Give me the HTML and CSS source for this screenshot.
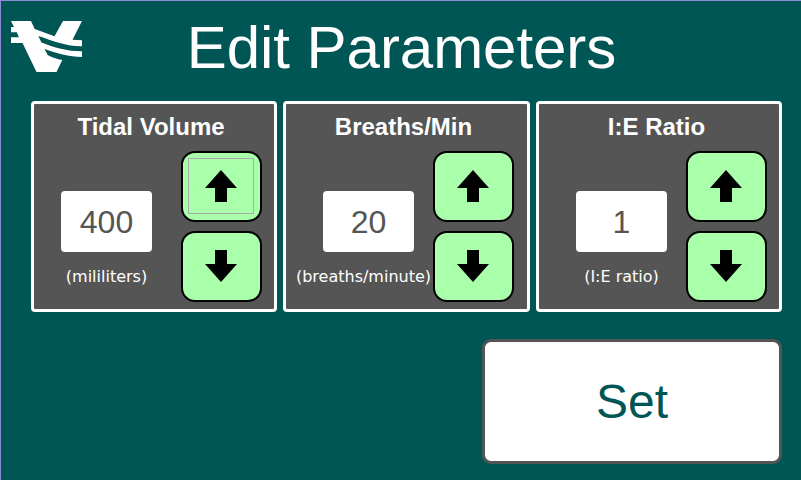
FILE: index.html
```html
<!DOCTYPE html>
<html lang="en">
<head>
<meta charset="utf-8">
<title>Edit Parameters</title>
<link rel="stylesheet" href="styles.css">
</head>
<body>
<main class="screen">
  <header class="header">
    <svg class="logo" width="72" height="52" viewBox="0 0 72 52" fill="#fff" aria-hidden="true">
      <path d="M0 0H20L23.700 8L43.500 15.300L52 0H71L61.500 18.700L71 19.300V25.300C56 25.500 42 20 27.300 15L30.500 21.500C43 26.500 56 30.300 71 30.300V36C58 36 45 32 33.500 28L36.700 34C41 36.500 46 38 51.300 39L45.500 51H25.500L11.500 22H0V16.300H8L5.700 11.300H0V6H3Z"/>
    </svg>
    <h1 class="title">Edit Parameters</h1>
  </header>
  <section class="panels">
    <article class="panel panel-tidal">
      <h2 class="panel-title">Tidal Volume</h2>
      <div class="panel-body">
        <div class="reading"><output class="value">400</output><span class="unit">(mililiters)</span></div>
        <div class="steppers">
          <button class="step step-focus" aria-label="Increase"><svg width="32" height="33" viewBox="0 0 32 33"><path d="M16 0L32 18H22V32H10V18H0Z"/></svg></button>
          <button class="step" aria-label="Decrease"><svg width="32" height="33" viewBox="0 0 32 33"><path d="M10 0H22V14H32L16 32L0 14H10Z"/></svg></button>
        </div>
      </div>
    </article>
    <article class="panel panel-breaths">
      <h2 class="panel-title">Breaths/Min</h2>
      <div class="panel-body">
        <div class="reading"><output class="value">20</output><span class="unit">(breaths/minute)</span></div>
        <div class="steppers">
          <button class="step" aria-label="Increase"><svg width="32" height="33" viewBox="0 0 32 33"><path d="M16 0L32 18H22V32H10V18H0Z"/></svg></button>
          <button class="step" aria-label="Decrease"><svg width="32" height="33" viewBox="0 0 32 33"><path d="M10 0H22V14H32L16 32L0 14H10Z"/></svg></button>
        </div>
      </div>
    </article>
    <article class="panel panel-ratio">
      <h2 class="panel-title">I:E Ratio</h2>
      <div class="panel-body">
        <div class="reading"><output class="value">1</output><span class="unit">(I:E ratio)</span></div>
        <div class="steppers">
          <button class="step" aria-label="Increase"><svg width="32" height="33" viewBox="0 0 32 33"><path d="M16 0L32 18H22V32H10V18H0Z"/></svg></button>
          <button class="step" aria-label="Decrease"><svg width="32" height="33" viewBox="0 0 32 33"><path d="M10 0H22V14H32L16 32L0 14H10Z"/></svg></button>
        </div>
      </div>
    </article>
  </section>
  <footer class="footer"><button class="set">Set</button></footer>
</main>
</body>
</html>
```
FILE: styles.css
```css
*, *::after { box-sizing: border-box; }
body { margin: 0; }
button { padding: 0; font: inherit; }
.screen {
  width: 801px;
  height: 480px;
  overflow: hidden;
  background: #005555;
  border-top: 1px solid #8c8cd8;
  border-left: 1px solid #8c8cd8;
  font-family: "Liberation Sans", Arial, sans-serif;
}
.header {
  display: grid;
  grid-template-columns: 72px 1fr 81px;
  height: 100px;
  padding: 0 0 0 10px;
}
.logo { margin-top: 20px; }
.title {
  margin: 0;
  padding-top: 12px;
  color: #fff;
  font-size: 60px;
  font-weight: 400;
  line-height: 70px;
  letter-spacing: -0.05px;
  text-align: center;
  white-space: nowrap;
}
.panels {
  display: grid;
  grid-template-columns: 246px 247px 246px;
  column-gap: 6px;
  height: 211px;
  padding-left: 30px;
}
.panel {
  background: #555;
  border: 3px solid #fff;
  border-radius: 4px;
}
.panel-title {
  height: 47px;
  margin: 0;
  padding-right: 6px;
  color: #fff;
  font-size: 24px;
  line-height: 46px;
  text-align: center;
}
.panel-ratio .panel-title { padding-right: 5px; }
.panel-body { display: flex; }
.reading {
  display: flex;
  flex-direction: column;
  align-items: center;
  width: 91px;
  margin: 40px 29px 0 27px;
}
.panel-breaths .reading, .panel-ratio .reading { margin: 40px 19px 0 37px; }
.value {
  width: 91px;
  height: 61px;
  background: #fff;
  border-radius: 4px;
  color: #555;
  font-size: 32px;
  line-height: 62px;
  text-align: center;
}
.unit {
  margin-top: 15px;
  color: #fff;
  font: 16px/20px "DejaVu Sans", sans-serif;
  white-space: nowrap;
}
.panel-breaths .unit { margin-left: -10px; }
.steppers { display: flex; flex-direction: column; gap: 9px; }
.step {
  display: grid;
  place-items: center;
  width: 81px;
  height: 71px;
  padding: 0 1px 0 0;
  background: #aaffaa;
  border: 2px solid #000;
  border-radius: 14px;
}
.step-focus::after {
  content: "";
  grid-area: 1 / 1;
  width: 66px;
  height: 56px;
  margin-bottom: 2px;
  border: 1px solid #aaa;
}
.step svg { grid-area: 1 / 1; margin-right: 1px; }
.footer { display: flex; justify-content: flex-end; padding: 27px 19px 0 0; }
.set {
  width: 300px;
  height: 125px;
  background: #fff;
  border: 3px solid #555;
  border-radius: 9px;
  color: #005555;
  font-size: 48px;
}
```
